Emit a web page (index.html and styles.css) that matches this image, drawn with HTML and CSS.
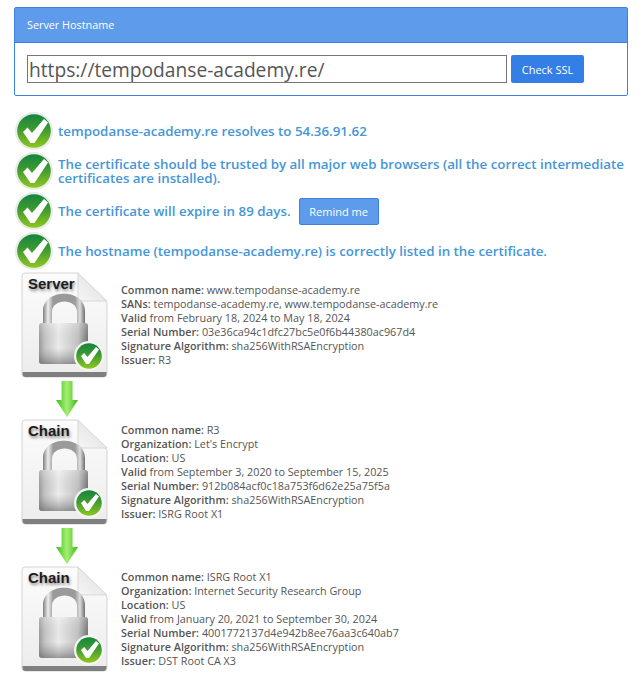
FILE: index.html
```html
<!DOCTYPE html>
<html lang="en">
<head>
  <meta charset="UTF-8" />
  <title>SSL Checker</title>
  <meta name="viewport" content="width=device-width, initial-scale=1.0" />
  <link rel="stylesheet" href="styles.css">
</head>
<body>

  <svg class="defs" width="0" height="0">
    <defs>
      <linearGradient id="ok-fill" x1="0" y1="0" x2="0" y2="1">
        <stop offset="0" stop-color="#14853f" />
        <stop offset="0.45" stop-color="#3f9a32" />
        <stop offset="1" stop-color="#8fc71f" />
      </linearGradient>
      <linearGradient id="body-fill" x1="0" y1="0" x2="1" y2="0">
        <stop offset="0" stop-color="#9a9a9a" />
        <stop offset="0.12" stop-color="#c4c4c4" />
        <stop offset="0.4" stop-color="#ececec" />
        <stop offset="0.8" stop-color="#c2c2c2" />
        <stop offset="1" stop-color="#6f6f6f" />
      </linearGradient>
      <linearGradient id="body-shade" x1="0" y1="0" x2="0" y2="1">
        <stop offset="0" stop-color="#fff" stop-opacity="0.25" />
        <stop offset="0.6" stop-color="#888" stop-opacity="0" />
        <stop offset="1" stop-color="#555" stop-opacity="0.55" />
      </linearGradient>
      <linearGradient id="shackle" x1="0" y1="0" x2="1" y2="0">
        <stop offset="0" stop-color="#7f7f7f" />
        <stop offset="0.12" stop-color="#eeeeee" />
        <stop offset="0.24" stop-color="#9a9a9a" />
        <stop offset="0.76" stop-color="#9a9a9a" />
        <stop offset="0.88" stop-color="#dddddd" />
        <stop offset="1" stop-color="#6f6f6f" />
      </linearGradient>
      <linearGradient id="page-fill" x1="0" y1="0" x2="0" y2="1">
        <stop offset="0" stop-color="#fcfcfc" />
        <stop offset="1" stop-color="#ececec" />
      </linearGradient>
      <linearGradient id="fold-fill" x1="0" y1="1" x2="1" y2="0">
        <stop offset="0" stop-color="#f6f6f6" />
        <stop offset="1" stop-color="#dcdcdc" />
      </linearGradient>
      <linearGradient id="arrow-fill" x1="0" y1="0" x2="1" y2="0">
        <stop offset="0" stop-color="#3fbe1c" />
        <stop offset="0.5" stop-color="#a4ef72" />
        <stop offset="1" stop-color="#3cb91a" />
      </linearGradient>
      <symbol id="ok" viewBox="0 0 38 38">
        <circle cx="19" cy="19" r="19" fill="#e8ebe8" />
        <circle cx="19" cy="19" r="16.800" fill="url(#ok-fill)" />
        <path d="M8 20l4.500-4.500L17 21 29 7l4 3.500L19.500 31h-4z" fill="#fff" />
      </symbol>
      <symbol id="lock" viewBox="0 0 88 108">
        <path d="M5 2h53l29 30v71q0 3-3 3H5q-3 0-3-3V5q0-3 3-3z" fill="url(#page-fill)" stroke="#d4d4d4" />
        <path d="M2.500 102q0 4 3 4h78q3 0 3-4v-1H2.500z" fill="#7f7f7f" />
        <path d="M58 2v22q0 6 6 6h23z" fill="url(#fold-fill)" stroke="#d8d8d8" />
        <path d="M23 53V40c0-23 42-23 42 0v13h-8V41c0-14-25-14-25 0v12z" fill="url(#shackle)" />
        <rect x="19" y="52" width="49" height="41" rx="3" fill="url(#body-fill)" />
        <rect x="19" y="52" width="49" height="41" rx="3" fill="url(#body-shade)" />
        <circle cx="69" cy="85" r="15" fill="#f4f6f4" />
        <circle cx="69" cy="85" r="12.800" fill="url(#ok-fill)" />
        <path d="M61 85l3.200-3 3.300 4L76 76l3 2.500L69 93h-3z" fill="#fff" />
      </symbol>
      <symbol id="arrow" viewBox="0 0 22 36">
        <path d="M5.500 0h11v19H22L11 36 0 19h5.500z" fill="url(#arrow-fill)" />
      </symbol>
    </defs>
  </svg>

  <div class="panel">
    <div class="panel-heading">Server Hostname</div>
    <div class="panel-body">
      <input class="host-input" type="text" value="https://tempodanse-academy.re/">
      <button class="btn btn-check">Check SSL</button>
    </div>
  </div>

  <div class="checks">
    <div class="check">
      <svg class="check-icon"><use href="#ok" /></svg>
      <p>tempodanse-academy.re resolves to 54.36.91.62</p>
    </div>
    <div class="check">
      <svg class="check-icon"><use href="#ok" /></svg>
      <p>The certificate should be trusted by all major web browsers (all the correct intermediate certificates are installed).</p>
    </div>
    <div class="check">
      <svg class="check-icon"><use href="#ok" /></svg>
      <p>The certificate will expire in 89 days.</p>
      <button class="btn btn-remind">Remind me</button>
    </div>
    <div class="check">
      <svg class="check-icon"><use href="#ok" /></svg>
      <p>The hostname (tempodanse-academy.re) is correctly listed in the certificate.</p>
    </div>
  </div>

  <div class="chain">
    <div class="cert">
      <div class="cert-icon">
        <svg class="lock"><use href="#lock" /></svg>
        <span class="cert-label">Server</span>
      </div>
      <div class="cert-info">
        <b>Common name:</b> www.tempodanse-academy.re<br>
        <b>SANs:</b> tempodanse-academy.re, www.tempodanse-academy.re<br>
        <b>Valid</b> from February 18, 2024 to May 18, 2024<br>
        <b>Serial Number:</b> 03e36ca94c1dfc27bc5e0f6b44380ac967d4<br>
        <b>Signature Algorithm:</b> sha256WithRSAEncryption<br>
        <b>Issuer:</b> R3
      </div>
    </div>
    <svg class="arrow"><use href="#arrow" /></svg>
    <div class="cert">
      <div class="cert-icon">
        <svg class="lock"><use href="#lock" /></svg>
        <span class="cert-label">Chain</span>
      </div>
      <div class="cert-info">
        <b>Common name:</b> R3<br>
        <b>Organization:</b> Let's Encrypt<br>
        <b>Location:</b> US<br>
        <b>Valid</b> from September 3, 2020 to September 15, 2025<br>
        <b>Serial Number:</b> 912b084acf0c18a753f6d62e25a75f5a<br>
        <b>Signature Algorithm:</b> sha256WithRSAEncryption<br>
        <b>Issuer:</b> ISRG Root X1
      </div>
    </div>
    <svg class="arrow"><use href="#arrow" /></svg>
    <div class="cert">
      <div class="cert-icon">
        <svg class="lock"><use href="#lock" /></svg>
        <span class="cert-label">Chain</span>
      </div>
      <div class="cert-info">
        <b>Common name:</b> ISRG Root X1<br>
        <b>Organization:</b> Internet Security Research Group<br>
        <b>Location:</b> US<br>
        <b>Valid</b> from January 20, 2021 to September 30, 2024<br>
        <b>Serial Number:</b> 4001772137d4e942b8ee76aa3c640ab7<br>
        <b>Signature Algorithm:</b> sha256WithRSAEncryption<br>
        <b>Issuer:</b> DST Root CA X3
      </div>
    </div>
  </div>

</body>
</html>
```

FILE: styles.css
```css
body {
  font-family: 'Open Sans', sans-serif;
  background: #fff;
  margin: 0;
  padding: 7px 13px 0 14px;
  color: #555;
  font-size: 11px;
}

.defs {
  position: absolute;
}

.panel {
  border: 1px solid #3b82e0;
  border-radius: 2px;
  height: 87px;
}

.panel-heading {
  background: #5e9bea;
  border-bottom: 1px solid #3b82e0;
  color: #fff;
  height: 34px;
  line-height: 34px;
  padding-left: 12px;
  font-size: 10.800px;
}

.panel-body {
  display: flex;
  gap: 4px;
  padding: 12px;
}

.host-input {
  width: 480px;
  height: 28px;
  box-sizing: border-box;
  border: 1px solid #767676;
  padding: 0 1px;
  font-family: inherit;
  font-size: 19.200px;
  color: #555;
}

.btn {
  color: #fff;
  border-radius: 2px;
  font-family: inherit;
  font-size: 11px;
  cursor: pointer;
}

.btn-check {
  width: 73px;
  height: 28px;
  background: #337fe5;
  border: none;
}

.btn-remind {
  width: 80px;
  height: 27px;
  margin-left: 8px;
  background: #5e9bea;
  border: 1px solid #3b82e0;
}

.checks {
  margin-top: 15px;
}

.check {
  display: flex;
  align-items: center;
  height: 40px;
  padding-left: 1px;
}

.check-icon {
  width: 38px;
  height: 38px;
  flex: none;
  margin-right: 5px;
}

.check p {
  margin: 0;
  color: #4596d8;
  font-size: 13.330px;
  font-weight: 600;
  line-height: 14px;
}

.chain {
  display: flex;
  flex-direction: column;
}

.cert {
  display: flex;
  align-items: center;
  height: 108px;
  padding-left: 6px;
}

.cert-icon {
  position: relative;
  width: 88px;
  height: 108px;
  flex: none;
  margin-right: 13px;
}

.lock {
  width: 88px;
  height: 108px;
  display: block;
}

.cert-label {
  position: absolute;
  top: 4px;
  left: 8px;
  font-family: 'Liberation Sans', sans-serif;
  font-weight: 700;
  font-size: 15px;
  line-height: 17px;
  color: #1c1c1c;
  text-shadow: 1px 2px 3px rgba(0, 0, 0, 0.45);
}

.cert-info {
  font-size: 10.800px;
  line-height: 14.100px;
}

.cert-info b {
  font-weight: 600;
}

.arrow {
  width: 22px;
  height: 36px;
  margin: 2px 0 1px 42px;
  display: block;
}
```
